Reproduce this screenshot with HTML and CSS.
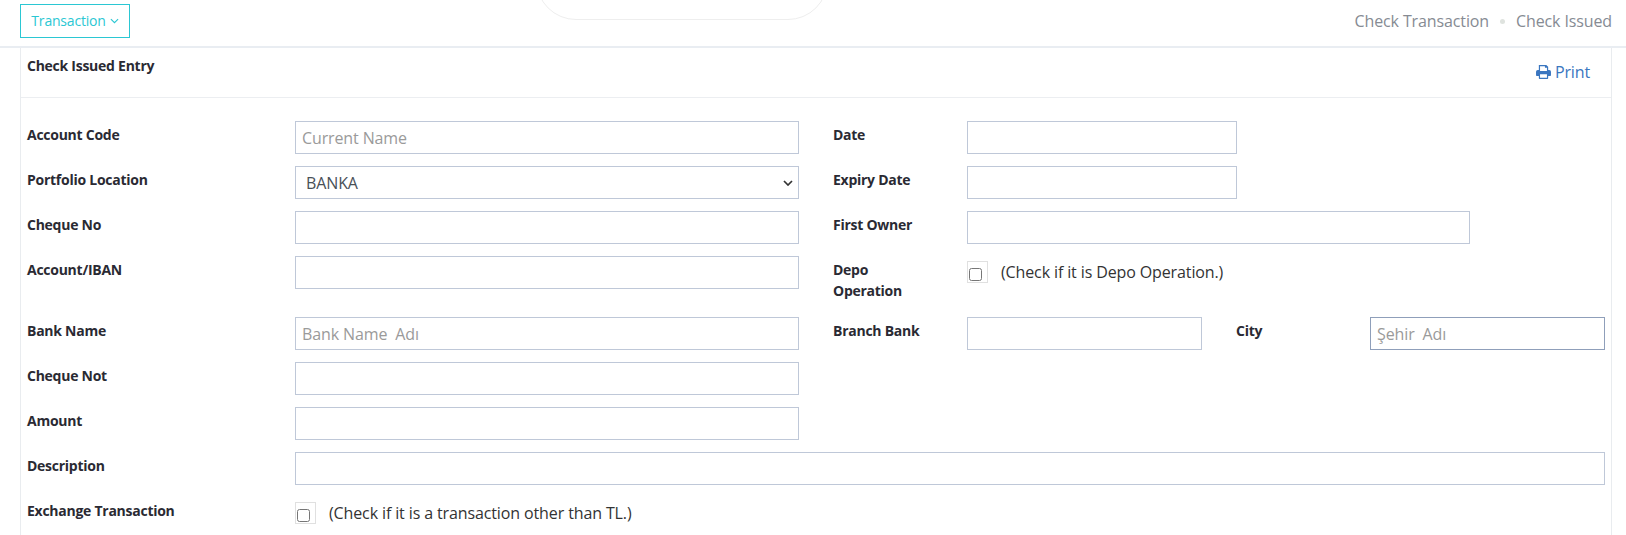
FILE: index.html
```html
<!DOCTYPE html>
<html lang="en">
<head>
<meta charset="utf-8">
<title>Check Issued Entry</title>
<link rel="stylesheet" href="styles.css">
</head>
<body>
<header class="topbar">
  <div class="notch"></div>
  <button class="menu-btn" type="button">Transaction
    <svg class="chev" viewBox="0 0 8 5" width="9" height="6"><path d="M.8.8 4 4 7.2.8" fill="none" stroke="currentColor" stroke-width="1"/></svg>
  </button>
  <nav class="crumbs"><span>Check Transaction</span><i class="dot"></i><span>Check Issued</span></nav>
</header>
<main class="panel">
  <div class="panel-head">
    <h1 class="panel-title">Check Issued Entry</h1>
    <a class="print" href="#">
      <svg class="print-icon" viewBox="0 0 16 15" width="15" height="14"><path fill="#3a76c0" fill-rule="evenodd" d="M3 0h8l2 2v3.400h1.200A1.800 1.800 0 0 1 16 7.200V11a.8.800 0 0 1-.8.800H13v2.400a.8.800 0 0 1-.8.800H3.800a.8.800 0 0 1-.8-.8v-2.400H.8A.8.800 0 0 1 0 11V7.200a1.800 1.800 0 0 1 1.800-1.800H3V0Zm1.300 1.300v5.200h7.400V3h-1.500a.7.700 0 0 1-.7-.7v-1H4.300Zm0 8.700v3.700h7.400V10H4.300Z"/></svg>
      Print
    </a>
  </div>
  <form class="form">
    <div class="row">
      <div class="col-left"><label class="lbl">Account Code</label><input class="ctl" placeholder="Current Name"></div>
      <div class="col-right"><label class="lbl lbl-r">Date</label><input class="ctl w-date"></div>
    </div>
    <div class="row">
      <div class="col-left"><label class="lbl">Portfolio Location</label>
        <div class="select-wrap"><select class="ctl sel"><option>BANKA</option></select>
        <svg class="sel-chev" viewBox="0 0 10 6" width="10" height="6"><path d="M1 1l4 4 4-4" fill="none" stroke="#333" stroke-width="1.700"/></svg></div></div>
      <div class="col-right"><label class="lbl lbl-r">Expiry Date</label><input class="ctl w-date"></div>
    </div>
    <div class="row">
      <div class="col-left"><label class="lbl">Cheque No</label><input class="ctl"></div>
      <div class="col-right"><label class="lbl lbl-r">First Owner</label><input class="ctl w-owner"></div>
    </div>
    <div class="row row-tall">
      <div class="col-left"><label class="lbl">Account/IBAN</label><input class="ctl"></div>
      <div class="col-right"><label class="lbl lbl-r lbl-wrap">Depo Operation</label>
        <div class="check"><span class="check-box"><input type="checkbox" class="cb"></span><span class="check-text">(Check if it is Depo Operation.)</span></div></div>
    </div>
    <div class="row">
      <div class="col-left"><label class="lbl">Bank Name</label><input class="ctl" placeholder="Bank Name  Adı"></div>
      <div class="col-right"><label class="lbl lbl-r">Branch Bank</label><input class="ctl w-branch"><label class="lbl lbl-city">City</label><input class="ctl w-city" placeholder="Şehir  Adı"></div>
    </div>
    <div class="row"><div class="col-left"><label class="lbl">Cheque Not</label><input class="ctl"></div></div>
    <div class="row"><div class="col-left"><label class="lbl">Amount</label><input class="ctl"></div></div>
    <div class="row"><div class="col-full"><label class="lbl">Description</label><input class="ctl"></div></div>
    <div class="row"><div class="col-left"><label class="lbl">Exchange Transaction</label>
      <div class="check"><span class="check-box"><input type="checkbox" class="cb"></span><span class="check-text">(Check if it is a transaction other than TL.)</span></div></div></div>
  </form>
</main>
</body>
</html>
```

FILE: styles.css
```css
* { box-sizing: border-box; }
html, body { margin: 0; height: 535px; overflow: hidden; }
body { background: #fff; font-family: "Open Sans", sans-serif; color: #212529; font-size: 16px; letter-spacing: -0.12px; }

.topbar {
  position: relative;
  height: 48px;
  padding: 4px 14px 0 20px;
  display: flex;
  justify-content: space-between;
  align-items: flex-start;
  border-bottom: 2px solid #e9edf2;
}
.notch {
  position: absolute;
  left: 536px;
  top: -60px;
  width: 292px;
  height: 80px;
  border: 1px solid #eeeeee;
  border-radius: 0 0 40px 40px;
}
.menu-btn {
  height: 34px;
  width: 110px;
  padding: 0 0 2px;
  background: #fff;
  border: 1px solid #2bc7d3;
  color: #2bc7d3;
  font: 14px "Open Sans", sans-serif;
  letter-spacing: -0.2px;
  display: flex;
  align-items: center;
  justify-content: center;
  gap: 4px;
}
.chev { margin-top: 2px; }
.crumbs {
  height: 34px;
  display: flex;
  align-items: center;
  color: #868b93;
  font-size: 16px;
}
.dot { width: 5px; height: 5px; border-radius: 50%; background: #dfe3df; margin: 0 11px; }

.panel {
  margin: 0 14px 0 20px;
  border-left: 1px solid #e9ecef;
  border-right: 1px solid #e9ecef;
  height: 487px;
}
.panel-head {
  height: 50px;
  padding: 9px 21px 0 6px;
  display: flex;
  justify-content: space-between;
  align-items: flex-start;
  border-bottom: 1px solid #eceef1;
}
.panel-title { margin: 0; font-size: 14px; font-weight: 700; line-height: 18px; letter-spacing: -0.26px; color: #2a2a33; }
.print { display: flex; align-items: center; gap: 4px; margin-top: 5px; color: #3a76c0; text-decoration: none; line-height: 20px; }

.form { padding: 23px 6px 0 6px; }
.row { display: flex; height: 45px; }
.row-tall { height: 61px; }
.col-left { display: flex; width: 806px; flex: none; }
.col-right { display: flex; }
.col-full { display: flex; flex: 1; }
.lbl {
  flex: none;
  width: 268px;
  font-size: 14px;
  font-weight: 700;
  letter-spacing: -0.26px;
  line-height: 21px;
  color: #2a2a33;
  padding-top: 3px;
}
.lbl-r { width: 134px; }
.lbl-wrap { width: 100px; margin-right: 34px; }
.lbl-city { width: 134px; margin-left: 34px; }
.ctl {
  display: block;
  height: 33px;
  width: 504px;
  padding: 0 6px;
  border: 1px solid #bfc8d8;
  border-radius: 0;
  background: #fff;
  font: 16px "Open Sans", sans-serif;
  letter-spacing: -0.12px;
  color: #495057;
  outline: none;
}
.ctl::placeholder { color: #9a9a9a; opacity: 1; }
.col-full .ctl { flex: 1; width: auto; }
.select-wrap { position: relative; width: 504px; }
.sel { appearance: none; padding-left: 10px; }
.sel-chev { position: absolute; right: 6px; top: 14px; }
.w-date { width: 270px; }
.w-owner { width: 503px; }
.w-branch { width: 235px; }
.w-city { width: 235px; border-color: #8f9fba; }
.check { display: flex; align-items: flex-start; }
.check-box {
  width: 21px;
  height: 22px;
  border: 1px solid #e0e0e0;
  margin-top: 5px;
  display: flex;
  align-items: flex-end;
  justify-content: flex-start;
}
.cb { margin: 0 0 1px 1px; width: 13px; height: 13px; }
.check-text { margin-left: 13px; line-height: 22px; margin-top: 5px; color: #333; }
```
